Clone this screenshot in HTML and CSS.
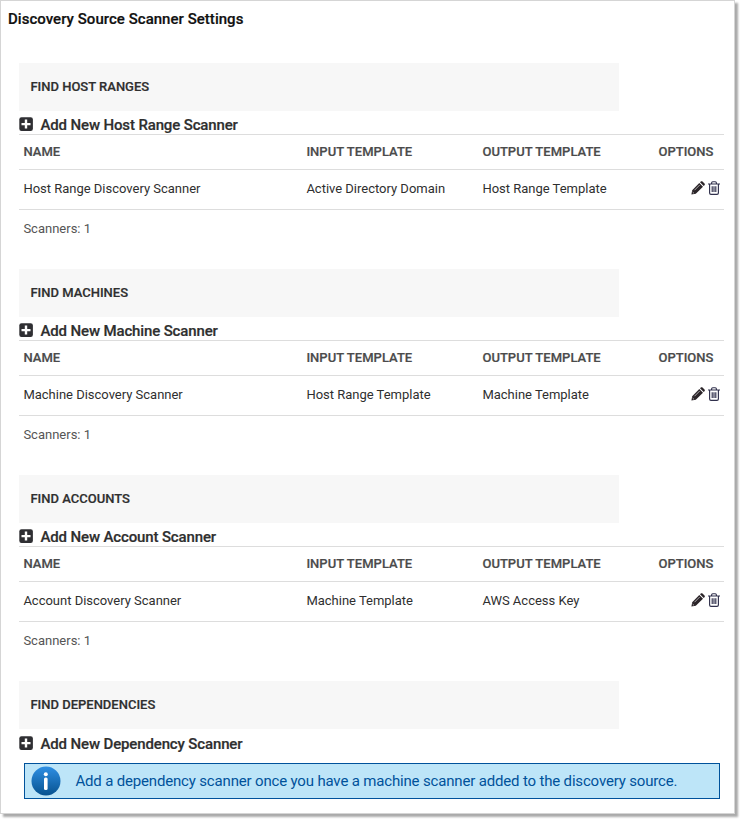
FILE: index.html
```html
<!DOCTYPE html>
<html lang="en">
<head>
<meta charset="utf-8">
<title>Discovery Source Scanner Settings</title>
<link rel="stylesheet" href="styles.css">
</head>
<body>
<svg width="0" height="0" class="defs" aria-hidden="true">
  <symbol id="plus" viewBox="0 0 14 14"><rect x=".3" y=".3" width="13.600" height="13.600" rx="2.2" fill="#2f2f33"/><path d="M7 2.600v9M2.500 7.100h9" stroke="#fff" stroke-width="2.4"/></symbol>
  <symbol id="pencil" viewBox="0 0 14 14"><path d="M.4 13.6l.8-4.400L8.300 2l3.700 3.700L4.800 12.800zM9 1.300l.8-.8c.5-.5 1.200-.5 1.700 0l2 2c.5.500.5 1.200 0 1.700l-.8.800z" fill="#2b2529"/><path d="M3.500 9.200l5.200-5.200M1.600 11l1.400 1.400" stroke="#fff" stroke-width=".6"/></symbol>
  <symbol id="trash" viewBox="0 0 12 14"><path d="M0 3h12M3.600 2.800V1.900Q3.600.7 4.800.7h2.400q1.200 0 1.200 1.200v.9M1.600 3v8.900q0 1.400 1.400 1.400h6q1.400 0 1.400-1.400V3M4.200 5.200v5.900M6 5.200v5.900M7.800 5.200v5.900" fill="none" stroke="#30304c" stroke-width="1.150"/></symbol>
</svg>
<main class="panel">
  <h1 class="title">Discovery Source Scanner Settings</h1>
  <section class="section">
    <h2 class="section-head">FIND HOST RANGES</h2>
    <a class="add"><svg class="plus"><use href="#plus"/></svg><span>Add New Host Range Scanner</span></a>
    <div class="table">
      <div class="row head"><span>NAME</span><span>INPUT TEMPLATE</span><span>OUTPUT TEMPLATE</span><span>OPTIONS</span></div>
      <div class="row"><span>Host Range Discovery Scanner</span><span>Active Directory Domain</span><span>Host Range Template</span><span class="options"><svg class="pencil"><use href="#pencil"/></svg><svg class="trash"><use href="#trash"/></svg></span></div>
    </div>
    <p class="count">Scanners: 1</p>
  </section>
  <section class="section">
    <h2 class="section-head">FIND MACHINES</h2>
    <a class="add"><svg class="plus"><use href="#plus"/></svg><span>Add New Machine Scanner</span></a>
    <div class="table">
      <div class="row head"><span>NAME</span><span>INPUT TEMPLATE</span><span>OUTPUT TEMPLATE</span><span>OPTIONS</span></div>
      <div class="row"><span>Machine Discovery Scanner</span><span>Host Range Template</span><span>Machine Template</span><span class="options"><svg class="pencil"><use href="#pencil"/></svg><svg class="trash"><use href="#trash"/></svg></span></div>
    </div>
    <p class="count">Scanners: 1</p>
  </section>
  <section class="section">
    <h2 class="section-head">FIND ACCOUNTS</h2>
    <a class="add"><svg class="plus"><use href="#plus"/></svg><span>Add New Account Scanner</span></a>
    <div class="table">
      <div class="row head"><span>NAME</span><span>INPUT TEMPLATE</span><span>OUTPUT TEMPLATE</span><span>OPTIONS</span></div>
      <div class="row"><span>Account Discovery Scanner</span><span>Machine Template</span><span>AWS Access Key</span><span class="options"><svg class="pencil"><use href="#pencil"/></svg><svg class="trash"><use href="#trash"/></svg></span></div>
    </div>
    <p class="count">Scanners: 1</p>
  </section>
  <section class="section section-last">
    <h2 class="section-head">FIND DEPENDENCIES</h2>
    <a class="add last"><svg class="plus"><use href="#plus"/></svg><span>Add New Dependency Scanner</span></a>
    <div class="info">
      <svg class="info-icon" viewBox="0 0 30 30">
        <defs><linearGradient id="blue" x1="0" y1="0" x2="0" y2="1"><stop offset="0" stop-color="#2e8fe4"/><stop offset="1" stop-color="#07528f"/></linearGradient></defs>
        <circle cx="15" cy="15" r="14.500" fill="url(#blue)"/>
        <circle cx="14.800" cy="8.200" r="2" fill="#fff"/><rect x="13" y="11.400" width="3.600" height="12.600" rx="1.500" fill="#fff"/>
      </svg>
      <span>Add a dependency scanner once you have a machine scanner added to the discovery source.</span>
    </div>
  </section>
</main>
</body>
</html>
```
FILE: styles.css
```css
* { box-sizing: border-box; }
body { margin: 0; min-height: 822px; background: #fff; color: #2f2f2f; font: 13px/20px Roboto, sans-serif; }
.defs { display: block; width: 0; height: 0; }
.panel { width: 735px; height: 814px; padding: 0 10px 0 18px; border: 1px solid #d5d5d5; background: #fff; box-shadow: 3px 3px 2px #aaa; }
.title { margin: 0 0 0 -11px; height: 62px; padding-top: 8px; font-size: 15px; font-weight: 500; line-height: 20px; letter-spacing: .03px; color: #111; }
.title, .section-head, .add, .head { -webkit-text-stroke: .2px currentColor; }
.section { height: 206px; }
.section-last { height: auto; }
.section-head { width: 600px; height: 48px; margin: 0; padding-left: 11.4px; background: #f7f7f7; font-size: 13px; font-weight: 500; line-height: 48px; }
.add { display: flex; align-items: center; gap: 7.5px; height: 23px; padding-top: 5px; font-size: 15px; font-weight: 500; line-height: 18px; letter-spacing: -.14px; }
.plus { width: 14px; height: 14px; margin-top: -2px; }
.last { height: 25px; }
.table { width: 705px; border-top: 1px solid #ddd; }
.row { display: grid; grid-template-columns: 283px 176px 176px 66px; height: 40px; padding-left: 4.4px; border-bottom: 1px solid #ddd; line-height: 38px; letter-spacing: -.01px; }
.head { height: 35px; line-height: 34px; font-weight: 500; color: #4b4b4b; letter-spacing: .03px; }
.options { display: flex; justify-content: flex-end; align-items: center; gap: 3.4px; padding-right: 4.4px; padding-bottom: 2.4px; }
.pencil { width: 14px; height: 14px; }
.trash { width: 12px; height: 14px; }
.count { margin: 0; padding-left: 4.4px; line-height: 38px; color: #555; }
.info { display: flex; align-items: center; gap: 14.4px; width: 696px; height: 36px; margin: 9px 0 0 5px; padding-left: 6px; border: 1px solid #00529b; background: #bde5f8; color: #00529b; font-size: 15px; letter-spacing: -.168px; white-space: nowrap; }
.info-icon { width: 30px; height: 30px; flex: none; }
```
